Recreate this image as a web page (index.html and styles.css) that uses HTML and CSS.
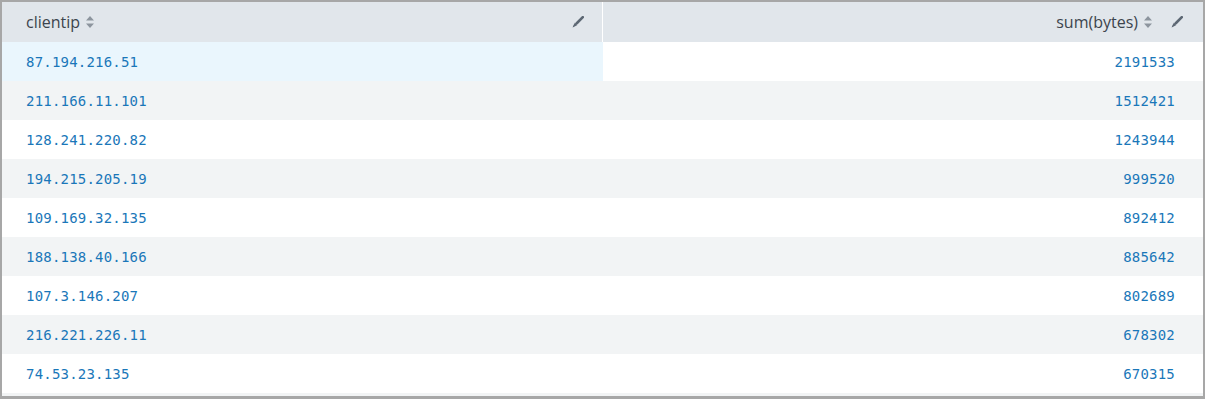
FILE: index.html
```html
<!DOCTYPE html>
<html>
<head>
<meta charset="utf-8">
<link rel="stylesheet" href="styles.css">
</head>
<body>
<div class="frame">
  <table class="grid">
    <thead>
      <tr>
        <th class="col-left">
          <div class="head">
            <span class="label">clientip</span>
            <svg class="sort" width="8" height="12" viewBox="0 0 8 12"><path d="M4 0 L8 4.5 H0 Z M0 7.5 H8 L4 12 Z" fill="#8d959e"/></svg>
            <span class="spacer"></span>
            <svg class="pen" width="12" height="12" viewBox="0 0 12 12"><path d="M5 7 L10.8 1.2" stroke="#5c6773" stroke-width="2.6" stroke-linecap="round"/><path d="M3 6.6 L5.4 9 L2.2 10.8 L0.6 11.4 L1.2 9.8 Z" fill="#5c6773"/></svg>
          </div>
        </th>
        <th class="col-right">
          <div class="head">
            <span class="spacer"></span>
            <span class="label">sum(bytes)</span>
            <svg class="sort" width="8" height="12" viewBox="0 0 8 12"><path d="M4 0 L8 4.5 H0 Z M0 7.5 H8 L4 12 Z" fill="#8d959e"/></svg>
            <svg class="pen pen-r" width="12" height="12" viewBox="0 0 12 12"><path d="M5 7 L10.8 1.2" stroke="#5c6773" stroke-width="2.6" stroke-linecap="round"/><path d="M3 6.6 L5.4 9 L2.2 10.8 L0.6 11.4 L1.2 9.8 Z" fill="#5c6773"/></svg>
          </div>
        </th>
      </tr>
    </thead>
    <tbody>
      <tr><td class="ip hover">87.194.216.51</td><td class="num">2191533</td></tr>
      <tr class="alt"><td class="ip">211.166.11.101</td><td class="num">1512421</td></tr>
      <tr><td class="ip">128.241.220.82</td><td class="num">1243944</td></tr>
      <tr class="alt"><td class="ip">194.215.205.19</td><td class="num">999520</td></tr>
      <tr><td class="ip">109.169.32.135</td><td class="num">892412</td></tr>
      <tr class="alt"><td class="ip">188.138.40.166</td><td class="num">885642</td></tr>
      <tr><td class="ip">107.3.146.207</td><td class="num">802689</td></tr>
      <tr class="alt"><td class="ip">216.221.226.11</td><td class="num">678302</td></tr>
      <tr><td class="ip">74.53.23.135</td><td class="num">670315</td></tr>
    </tbody>
  </table>
</div>
</body>
</html>
```

FILE: styles.css
```css
html, body {
  margin: 0;
  padding: 0;
  background: #ffffff;
}
.frame {
  width: 1205px;
  height: 399px;
  box-sizing: border-box;
  border: 2px solid #a7a7a7;
  border-bottom-width: 3px;
  background: #f2f4f5;
  overflow: hidden;
}
.grid {
  width: 1201px;
  border-collapse: collapse;
  table-layout: fixed;
}
.col-left { width: 600px; border-right: 1px solid #ffffff; }
th {
  height: 40px;
  padding: 0;
  background: #e1e6eb;
  font-family: "Open Sans", "Liberation Sans", sans-serif;
  font-weight: 400;
  font-size: 16px;
  color: #3c444d;
}
.head {
  display: flex;
  align-items: center;
  height: 40px;
}
.col-left .head { padding: 0 18px 0 24px; }
.col-right .head { padding: 0 20px 0 24px; }
.spacer { flex: 1; }
.sort { margin-left: 6px; }
.pen-r { margin-left: 19px; }
td {
  height: 39px;
  padding: 0;
  font-family: "DejaVu Sans Mono", "Liberation Mono", monospace;
  font-size: 14px;
  letter-spacing: 0.2px;
  color: #1a77b9;
  background: #ffffff;
}
tr.alt td { background: #f2f4f5; }
td.ip { padding-left: 24px; }
td.num { text-align: right; padding-right: 28px; }
td.hover { background: #eaf6fd; }
```
